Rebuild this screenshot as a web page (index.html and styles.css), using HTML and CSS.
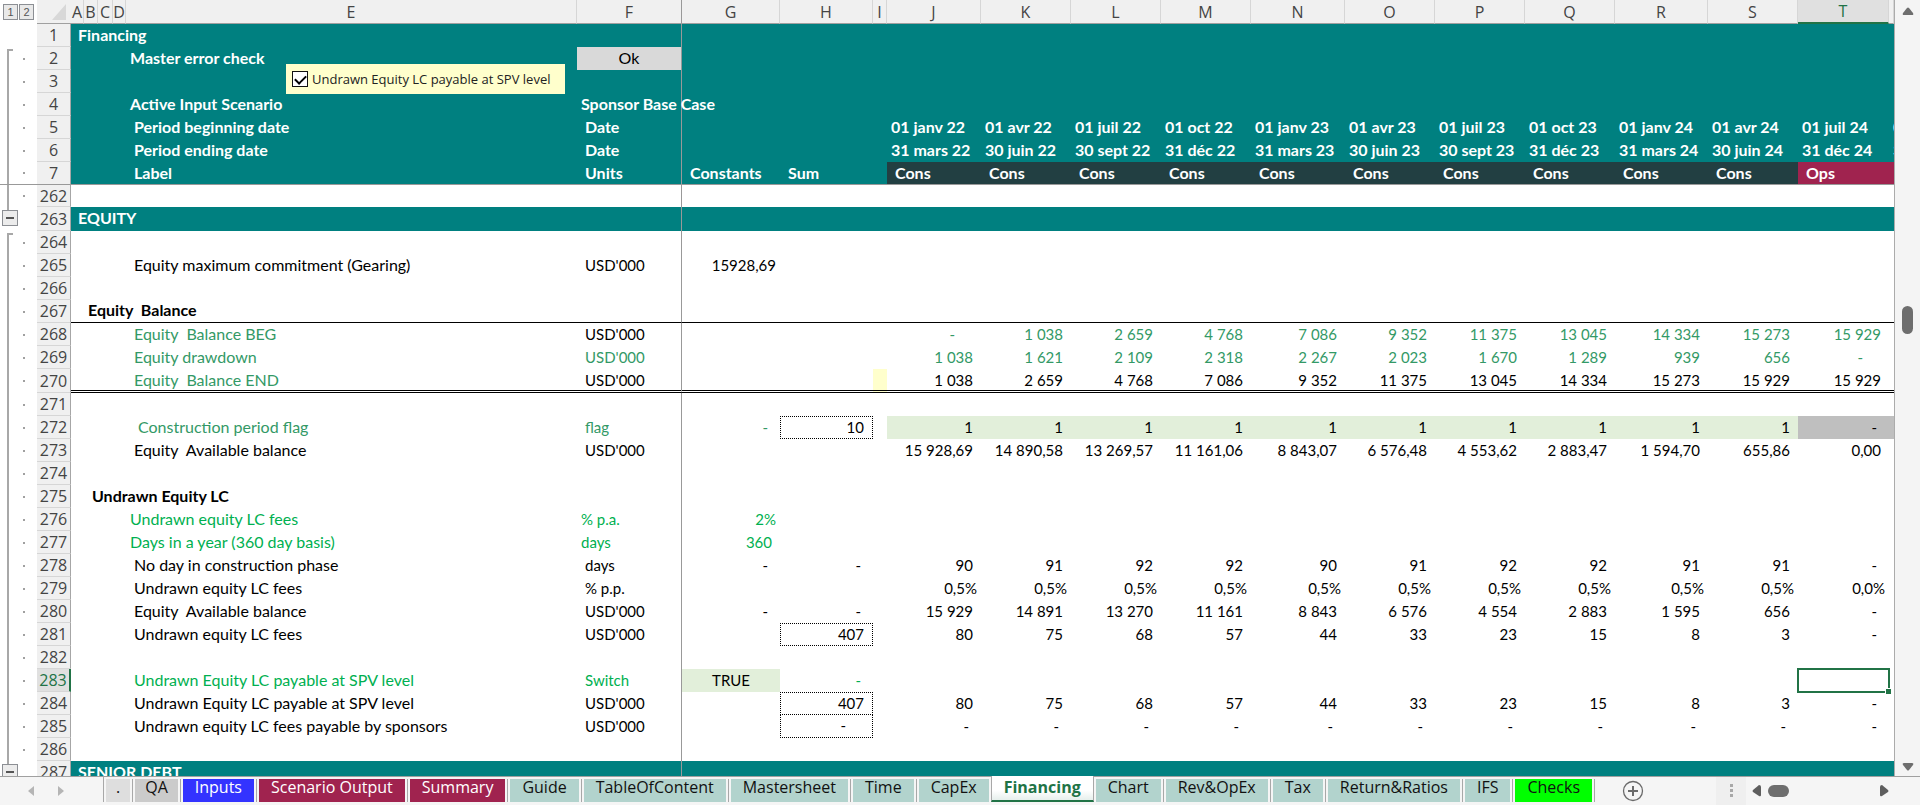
FILE: index.html
```html
<!DOCTYPE html>
<html lang="en">
<head>
<meta charset="utf-8">
<title>Financing</title>
<link rel="stylesheet" href="styles.css">
</head>
<body>
<main class="workspace">
<div class="sheet">
<table class="grid">
<colgroup><col class="c-gutter"><col class="c-head"><col class="c-a"><col class="c-b"><col class="c-c"><col class="c-d"><col class="c-e"><col class="c-f"><col class="c-g"><col class="c-h"><col class="c-i"><col class="c-wide"><col class="c-mid"><col class="c-mid"><col class="c-mid"><col class="c-wide"><col class="c-mid"><col class="c-mid"><col class="c-mid"><col class="c-r"><col class="c-mid"><col class="c-t"><col></colgroup>
<thead>
<tr class="letters"><td class="levels"><div class="level-row"><button type="button">1</button><button type="button">2</button></div></td><td class="corner"><svg width="14" height="16" viewBox="0 0 14 16"><path d="M14 0V16H0Z" fill="#d8d8d8"/></svg></td><th>A</th><th>B</th><th>C</th><th>D</th><th>E</th><th class="f">F</th><th>G</th><th>H</th><th>I</th><th>J</th><th>K</th><th>L</th><th>M</th><th>N</th><th>O</th><th>P</th><th>Q</th><th>R</th><th>S</th><th class="current">T</th><th></th></tr>
</thead>
<tbody>
<tr class="band"><td class="gut"></td><th class="num">1</th><td colspan="5" class="in-0">Financing</td><td class="f"></td><td colspan="15"></td></tr>
<tr class="band"><td class="gut open dot"></td><th class="num">2</th><td colspan="5" class="in-3">Master error check</td><td class="f ok">Ok</td><td colspan="15"></td></tr>
<tr class="band"><td class="gut line dot"></td><th class="num">3</th><td colspan="5"></td><td class="f"></td><td colspan="15"></td></tr>
<tr class="band"><td class="gut line dot"></td><th class="num">4</th><td colspan="5" class="in-3">Active Input Scenario</td><td class="f l4">Sponsor Base Case</td><td colspan="15"></td></tr>
<tr class="band"><td class="gut line dot"></td><th class="num">5</th><td colspan="5" class="in-4">Period beginning date</td><td class="f">Date</td><td></td><td></td><td></td><td class="l4">01 janv 22</td><td class="l4">01 avr 22</td><td class="l4">01 juil 22</td><td class="l4">01 oct 22</td><td class="l4">01 janv 23</td><td class="l4">01 avr 23</td><td class="l4">01 juil 23</td><td class="l4">01 oct 23</td><td class="l4">01 janv 24</td><td class="l4">01 avr 24</td><td class="l4">01 juil 24</td><td class="l4">01 janv 25</td></tr>
<tr class="band"><td class="gut line dot"></td><th class="num">6</th><td colspan="5" class="in-4">Period ending date</td><td class="f">Date</td><td></td><td></td><td></td><td class="l4">31 mars 22</td><td class="l4">30 juin 22</td><td class="l4">30 sept 22</td><td class="l4">31 déc 22</td><td class="l4">31 mars 23</td><td class="l4">30 juin 23</td><td class="l4">30 sept 23</td><td class="l4">31 déc 23</td><td class="l4">31 mars 24</td><td class="l4">30 juin 24</td><td class="l4">31 déc 24</td><td class="l4">30 juin 25</td></tr>
<tr class="band frozen"><td class="gut line dot"></td><th class="num">7</th><td colspan="5" class="in-4">Label</td><td class="f">Units</td><td class="l8">Constants</td><td class="l8">Sum</td><td></td><td class="cons">Cons</td><td class="cons">Cons</td><td class="cons">Cons</td><td class="cons">Cons</td><td class="cons">Cons</td><td class="cons">Cons</td><td class="cons">Cons</td><td class="cons">Cons</td><td class="cons">Cons</td><td class="cons">Cons</td><td class="ops" colspan="2">Ops</td></tr>
<tr class="short"><td class="gut line dot"></td><th class="num">262</th><td colspan="5"></td><td class="f"></td><td colspan="15"></td></tr>
<tr class="band tall"><td class="gut fold"><button type="button" aria-label="Collapse group"></button></td><th class="num">263</th><td colspan="5" class="in-0">EQUITY</td><td class="f"></td><td colspan="15"></td></tr>
<tr><td class="gut open dot"></td><th class="num">264</th><td colspan="5"></td><td class="f"></td><td colspan="15"></td></tr>
<tr><td class="gut line dot"></td><th class="num">265</th><td colspan="5" class="in-4">Equity maximum commitment (Gearing)</td><td class="f">USD'000</td><td class="r4">15928,69</td><td colspan="14"></td></tr>
<tr><td class="gut line dot"></td><th class="num">266</th><td colspan="5"></td><td class="f"></td><td colspan="15"></td></tr>
<tr class="ruled"><td class="gut line dot"></td><th class="num">267</th><td colspan="5" class="in-1 bold">Equity  Balance</td><td class="f"></td><td colspan="15"></td></tr>
<tr class="sea"><td class="gut line dot"></td><th class="num">268</th><td colspan="5" class="in-4">Equity  Balance BEG</td><td class="f ink">USD'000</td><td></td><td></td><td></td><td class="r26">-</td><td class="n">1 038</td><td class="n">2 659</td><td class="n">4 768</td><td class="n">7 086</td><td class="n">9 352</td><td class="n">11 375</td><td class="n">13 045</td><td class="n">14 334</td><td class="n">15 273</td><td class="n">15 929</td><td></td></tr>
<tr class="sea"><td class="gut line dot"></td><th class="num">269</th><td colspan="5" class="in-4">Equity drawdown</td><td class="f">USD'000</td><td></td><td></td><td></td><td class="n">1 038</td><td class="n">1 621</td><td class="n">2 109</td><td class="n">2 318</td><td class="n">2 267</td><td class="n">2 023</td><td class="n">1 670</td><td class="n">1 289</td><td class="n">939</td><td class="n">656</td><td class="r26">-</td><td></td></tr>
<tr class="totals tall"><td class="gut line dot"></td><th class="num">270</th><td colspan="5" class="in-4 sea">Equity  Balance END</td><td class="f">USD'000</td><td></td><td></td><td class="note"></td><td class="n">1 038</td><td class="n">2 659</td><td class="n">4 768</td><td class="n">7 086</td><td class="n">9 352</td><td class="n">11 375</td><td class="n">13 045</td><td class="n">14 334</td><td class="n">15 273</td><td class="n">15 929</td><td class="n">15 929</td><td></td></tr>
<tr><td class="gut line dot"></td><th class="num">271</th><td colspan="5"></td><td class="f"></td><td colspan="15"></td></tr>
<tr><td class="gut line dot"></td><th class="num">272</th><td colspan="5" class="in-5 sea">Construction period flag</td><td class="f sea">flag</td><td class="r12 sea">-</td><td class="n box">10</td><td></td><td class="n flag">1</td><td class="n flag">1</td><td class="n flag">1</td><td class="n flag">1</td><td class="n flag">1</td><td class="n flag">1</td><td class="n flag">1</td><td class="n flag">1</td><td class="n flag">1</td><td class="n flag">1</td><td class="r12 off">-</td><td class="off"></td></tr>
<tr><td class="gut line dot"></td><th class="num">273</th><td colspan="5" class="in-4">Equity  Available balance</td><td class="f">USD'000</td><td></td><td></td><td></td><td class="n">15 928,69</td><td class="n">14 890,58</td><td class="n">13 269,57</td><td class="n">11 161,06</td><td class="n">8 843,07</td><td class="n">6 576,48</td><td class="n">4 553,62</td><td class="n">2 883,47</td><td class="n">1 594,70</td><td class="n">655,86</td><td class="n">0,00</td><td></td></tr>
<tr><td class="gut line dot"></td><th class="num">274</th><td colspan="5"></td><td class="f"></td><td colspan="15"></td></tr>
<tr><td class="gut line dot"></td><th class="num">275</th><td colspan="5" class="in-2 bold">Undrawn Equity LC</td><td class="f"></td><td colspan="15"></td></tr>
<tr class="input"><td class="gut line dot"></td><th class="num">276</th><td colspan="5" class="in-3">Undrawn equity LC fees</td><td class="f l4">% p.a.</td><td class="r4">2%</td><td colspan="14"></td></tr>
<tr class="input"><td class="gut line dot"></td><th class="num">277</th><td colspan="5" class="in-3">Days in a year (360 day basis)</td><td class="f l4">days</td><td class="n">360</td><td colspan="14"></td></tr>
<tr><td class="gut line dot"></td><th class="num">278</th><td colspan="5" class="in-4">No day in construction phase</td><td class="f">days</td><td class="r12">-</td><td class="r12">-</td><td></td><td class="n">90</td><td class="n">91</td><td class="n">92</td><td class="n">92</td><td class="n">90</td><td class="n">91</td><td class="n">92</td><td class="n">92</td><td class="n">91</td><td class="n">91</td><td class="r12">-</td><td></td></tr>
<tr><td class="gut line dot"></td><th class="num">279</th><td colspan="5" class="in-4">Undrawn equity LC fees</td><td class="f">% p.p.</td><td></td><td></td><td></td><td class="r4">0,5%</td><td class="r4">0,5%</td><td class="r4">0,5%</td><td class="r4">0,5%</td><td class="r4">0,5%</td><td class="r4">0,5%</td><td class="r4">0,5%</td><td class="r4">0,5%</td><td class="r4">0,5%</td><td class="r4">0,5%</td><td class="r4">0,0%</td><td></td></tr>
<tr><td class="gut line dot"></td><th class="num">280</th><td colspan="5" class="in-4">Equity  Available balance</td><td class="f">USD'000</td><td class="r12">-</td><td class="r12">-</td><td></td><td class="n">15 929</td><td class="n">14 891</td><td class="n">13 270</td><td class="n">11 161</td><td class="n">8 843</td><td class="n">6 576</td><td class="n">4 554</td><td class="n">2 883</td><td class="n">1 595</td><td class="n">656</td><td class="r12">-</td><td></td></tr>
<tr><td class="gut line dot"></td><th class="num">281</th><td colspan="5" class="in-4">Undrawn equity LC fees</td><td class="f">USD'000</td><td></td><td class="n box">407</td><td></td><td class="n">80</td><td class="n">75</td><td class="n">68</td><td class="n">57</td><td class="n">44</td><td class="n">33</td><td class="n">23</td><td class="n">15</td><td class="n">8</td><td class="n">3</td><td class="r12">-</td><td></td></tr>
<tr><td class="gut line dot"></td><th class="num">282</th><td colspan="5"></td><td class="f"></td><td colspan="15"></td></tr>
<tr class="input"><td class="gut line dot"></td><th class="num current">283</th><td colspan="5" class="in-4">Undrawn Equity LC payable at SPV level</td><td class="f">Switch</td><td class="switch">TRUE</td><td class="r12">-</td><td colspan="11"></td><td class="selected"></td><td></td></tr>
<tr><td class="gut line dot"></td><th class="num">284</th><td colspan="5" class="in-4">Undrawn Equity LC payable at SPV level</td><td class="f">USD'000</td><td></td><td class="n box">407</td><td></td><td class="n">80</td><td class="n">75</td><td class="n">68</td><td class="n">57</td><td class="n">44</td><td class="n">33</td><td class="n">23</td><td class="n">15</td><td class="n">8</td><td class="n">3</td><td class="r12">-</td><td></td></tr>
<tr><td class="gut line dot"></td><th class="num">285</th><td colspan="5" class="in-4">Undrawn equity LC fees payable by sponsors</td><td class="f">USD'000</td><td></td><td class="r26 box under">-</td><td></td><td class="r12">-</td><td class="r12">-</td><td class="r12">-</td><td class="r12">-</td><td class="r12">-</td><td class="r12">-</td><td class="r12">-</td><td class="r12">-</td><td class="r12">-</td><td class="r12">-</td><td class="r12">-</td><td></td></tr>
<tr><td class="gut line dot"></td><th class="num">286</th><td colspan="5"></td><td class="f"></td><td colspan="15"></td></tr>
<tr class="band"><td class="gut fold"><button type="button" aria-label="Collapse group"></button></td><th class="num">287</th><td colspan="5" class="in-0">SENIOR DEBT</td><td class="f"></td><td colspan="15"></td></tr>
</tbody>
</table>
<label class="float-check"><input type="checkbox" checked><span>Undrawn Equity LC payable at SPV level</span></label>
</div>
<div class="vscroll">
<button type="button" aria-label="Scroll up"><svg width="12" height="8" viewBox="0 0 12 8"><path d="M5 1Q6 0 7 1L11 6Q12 8 10 8H2Q0 8 1 6Z" fill="#6e6e6e"/></svg></button>
<div class="vtrack"><div class="vthumb"></div></div>
<button type="button" aria-label="Scroll down"><svg width="12" height="8" viewBox="0 0 12 8"><path d="M5 7Q6 8 7 7L11 2Q12 0 10 0H2Q0 0 1 2Z" fill="#6e6e6e"/></svg></button>
</div>
</main>
<footer class="tabbar">
<div class="tabnav">
<button type="button" aria-label="Previous sheet"><svg width="6" height="10" viewBox="0 0 6 10"><path d="M6 0V10L0 5Z" fill="#b5b5b5"/></svg></button>
<button type="button" aria-label="Next sheet"><svg width="6" height="10" viewBox="0 0 6 10"><path d="M0 0V10L6 5Z" fill="#b5b5b5"/></svg></button>
</div>
<nav class="tabs">
<a href="#dot" class="pale">.</a><a href="#qa" class="gray">QA</a><a href="#inputs" class="blue">Inputs</a><a href="#scenario" class="wine">Scenario Output</a><a href="#summary" class="wine">Summary</a><a href="#guide">Guide</a><a href="#toc">TableOfContent</a><a href="#master">Mastersheet</a><a href="#time">Time</a><a href="#capex">CapEx</a><a href="#financing" class="active" aria-current="page">Financing</a><a href="#chart">Chart</a><a href="#opex">Rev&amp;OpEx</a><a href="#tax">Tax</a><a href="#ratios">Return&amp;Ratios</a><a href="#ifs">IFS</a><a href="#checks" class="lime">Checks</a>
</nav>
<button type="button" class="add" aria-label="New sheet"><svg width="22" height="22" viewBox="0 0 22 22" fill="none" stroke="#6a6a6a"><circle cx="11" cy="11" r="9.5" stroke-width="1.3"/><path d="M11 6V16M6 11H16" stroke-width="2"/></svg></button>
<div class="hscroll">
<span class="grip"><svg width="3" height="14" viewBox="0 0 3 14" fill="#a8a8a8"><path d="M0 0H3V3H0ZM0 5H3V8H0ZM0 10H3V13H0Z"/></svg></span>
<button type="button" aria-label="Scroll left"><svg width="9" height="12" viewBox="0 0 9 12"><path d="M7 0Q9 0 9 2V10Q9 12 7 11L1 7Q0 6 1 5Z" fill="#5e5e5e"/></svg></button>
<div class="htrack"><div class="hthumb"></div></div>
<button type="button" aria-label="Scroll right"><svg width="9" height="12" viewBox="0 0 9 12"><path d="M2 0Q0 0 0 2V10Q0 12 2 11L8 7Q9 6 8 5Z" fill="#5e5e5e"/></svg></button>
</div>
</footer>
</body>
</html>
```
FILE: styles.css
```css
* { box-sizing: border-box; }
body {
  margin: 0;
  height: 100vh;
  display: flex;
  flex-direction: column;
  overflow: hidden;
  background: #fff;
  color: #000;
  font-family: Lato, "Liberation Sans", sans-serif;
  font-size: 15px;
}
button { padding: 0; border: 0; background: none; font: inherit; }
svg { display: block; }

.workspace { flex: 1; min-height: 0; display: flex; }
.sheet { flex: 1; min-width: 0; overflow: hidden; position: relative; }

.grid { width: 100%; table-layout: fixed; border-collapse: separate; border-spacing: 0; }
.c-gutter { width: 37px; }
.c-head { width: 34px; }
.c-a, .c-d { width: 13px; }
.c-b { width: 14px; }
.c-c { width: 15px; }
.c-e { width: 451px; }
.c-f { width: 105px; }
.c-g { width: 98px; }
.c-h { width: 93px; }
.c-i { width: 14px; }
.c-wide { width: 94px; }
.c-mid { width: 90px; }
.c-r { width: 93px; }
.c-t { width: 91px; }

td, th { height: 23px; padding: 0 0 2px; line-height: 18px; white-space: pre; text-align: left; vertical-align: middle; }
.tall td, .tall th { height: 24px; }
.short td, .short th { height: 22px; }

.letters th, .num { padding: 0; line-height: 20px; font-family: "Open Sans", "Noto Sans", sans-serif; font-size: 16px; font-weight: 400; color: #444; text-align: center; background: #f0f0f0; }
.letters th, .letters td { height: 24px; padding: 0; border-bottom: 1px solid #a0a0a0; }
.letters th { border-right: 1px solid #d6d6d6; }
.letters .levels { border-bottom: 0; }
.letters .corner { background: #f0f0f0; padding-left: 15px; }
.letters th.current { background: #e0e0e0; color: #217346; border-bottom: 2px solid #217346; }
.level-row { display: flex; gap: 1px; padding-left: 3px; }
.level-row button { width: 15px; height: 16px; border: 1px solid #8c8f94; background: #e9e9e9; color: #555; font: 11px "Liberation Sans", sans-serif; }

.num { border-right: 1px solid #a6a6a6; border-bottom: 1px solid #d6d6d6; }
.num.current { background: #e0e0e0; color: #217346; border-right: 2px solid #217346; }

/* Outline gutter: bracket line and row dots */
.gut { background-repeat: no-repeat; }
.dot { background-image: linear-gradient(#a0a0a0, #a0a0a0); background-size: 2px 2px; background-position: 23px center; }
.line.dot { background-image: linear-gradient(#a8a8a8, #a8a8a8), linear-gradient(#a0a0a0, #a0a0a0); background-size: 2px 100%, 2px 2px; background-position: 7px 0, 23px center; }
.open.dot { background-image: linear-gradient(#a8a8a8, #a8a8a8), linear-gradient(#a8a8a8, #a8a8a8), linear-gradient(#a0a0a0, #a0a0a0); background-size: 2px 21px, 6px 2px, 2px 2px; background-position: 7px 2px, 7px 2px, 23px center; }
.fold { background-image: linear-gradient(#a8a8a8, #a8a8a8); background-size: 2px 5px; background-position: 7px 0; padding-left: 2px; }
.fold button { display: block; width: 16px; height: 16px; border: 1px solid #8c8f94; background: linear-gradient(#555, #555) center / 8px 2px no-repeat #ececec; }

.f { padding-left: 8px; border-right: 1px solid #999; }
.letters th.f { padding-left: 0; border-right-color: #999; }
.in-0, .in-1, .in-2, .in-3, .in-4, .in-5 { font-size: 16px; }
.in-0 { padding-left: 7px; }
.in-1 { padding-left: 17px; }
.in-2 { padding-left: 21px; }
.in-3 { padding-left: 59px; }
.in-4 { padding-left: 63px; }
.in-5 { padding-left: 67px; }
.l4 { padding-left: 4px; }
.l8 { padding-left: 8px; }
.n, .r4, .r12, .r26 { text-align: right; }
.r4 { padding-right: 4px; }
.n { padding-right: 8px; }
.r12 { padding-right: 12px; }
.r26 { padding-right: 26px; }

.bold { font-weight: 700; }
.band td:not(.gut) { background-color: #008080; color: #fff; font-size: 16px; font-weight: 700; }
.band td.ok { background-color: #d9d9d9; color: #000; font-weight: 400; text-align: center; padding-left: 0; }
.frozen td, .frozen th { padding-bottom: 0; border-bottom: 1px solid #999; }
.frozen td.cons, .frozen td.ops { padding-left: 8px; }
.frozen td.cons { background-color: #223f42; }
.frozen td.ops { background-color: #a0234f; }
.ruled td:not(.gut) { border-bottom: 1px solid #000; }
.totals td:not(.gut) { border-bottom: 3px double #000; padding-bottom: 0; }
.sea td, td.sea { color: #339966; }
.sea td.ink { color: #000; }
.input td { color: #00b050; }
.note { background: #ffffcc; }
.flag { background: #e2efda; }
.off { background: #bfbfbf; }
.box { border: 1px dotted #000; }
.box.under { border-top: 0; }
.input td.switch { background: #e2efda; color: #000; text-align: center; }
.selected { position: relative; outline: 2px solid #217346; outline-offset: -1px; }
.selected::after { content: ""; position: absolute; right: -2px; bottom: -2px; width: 5px; height: 5px; background: #217346; box-shadow: -1px -1px 0 #fff; }

.float-check { position: absolute; left: 286px; top: 64px; display: flex; align-items: center; gap: 4px; height: 30px; padding: 0 15px 0 6px; background: #ffffcc; color: #222; font-family: "Open Sans", "Noto Sans", sans-serif; font-size: 13px; white-space: nowrap; }
.float-check input { appearance: none; width: 16px; height: 16px; margin: 0; border: 1px solid #111; background: #fff; display: grid; place-items: center; }
.float-check input:checked::after { content: ""; width: 9px; height: 5px; border-left: 2px solid #000; border-bottom: 2px solid #000; transform: translateY(-1px) rotate(-45deg); }

.vscroll { width: 26px; border-left: 1px solid #ababab; background: #f4f4f4; display: flex; flex-direction: column; align-items: center; padding: 7px 0 5px; }
.vtrack { flex: 1; padding-top: 291px; }
.vthumb { width: 11px; height: 28px; border-radius: 6px; background: #6e6e6e; }

.tabbar { height: 29px; display: flex; align-items: center; background: #f5f5f5; border-top: 1px solid #a0a0a0; font-family: "Open Sans", "Noto Sans", sans-serif; font-size: 16px; }
.tabnav { width: 103px; display: flex; gap: 24px; padding-left: 28px; }
.tabs { display: flex; align-self: flex-start; height: 25px; border-left: 1px solid #a8a8a8; }
.tabs a { position: relative; margin: 2px 3px 0 2px; padding: 0 12px; line-height: 16px; background: #b2d3cd; color: #111; text-decoration: none; white-space: nowrap; }
.tabs a::after { content: ""; position: absolute; right: -3px; top: 0; width: 1px; height: 23px; background: #a8a8a8; }
.tabs a.pale { background: #dedede; padding: 0 10px; }
.tabs a.gray { background: #cbcbcb; padding: 0 10px; }
.tabs a.blue { background: #3333ff; color: #fff; }
.tabs a.wine { background: #a0234f; color: #fff; }
.tabs a.lime { background: #00ff00; }
.tabs a.active { margin: -1px 0 0 -1px; padding-top: 3px; background: linear-gradient(#fff 60%, #e6efec); color: #217346; font-weight: 700; border: solid #a8a8a8; border-width: 0 1px 2px; border-bottom-color: #217346; }
.tabs a.active::after { display: none; }
.add { margin-left: 27px; }
.hscroll { margin-left: auto; width: 204px; align-self: stretch; display: flex; align-items: center; padding-right: 31px; }
.grip { width: 30px; height: 100%; display: grid; place-items: center; background: #efefef; margin-right: 6px; }
.htrack { flex: 1; padding-left: 7px; }
.hthumb { width: 21px; height: 12px; border-radius: 6px; background: #6e6e6e; }
```
